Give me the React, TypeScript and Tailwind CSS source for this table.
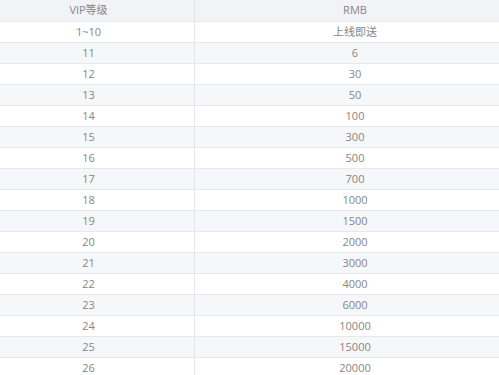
import React from 'react';

const rows: [string, string][] = [
  ['1~10', '上线即送'],
  ['11', '6'],
  ['12', '30'],
  ['13', '50'],
  ['14', '100'],
  ['15', '300'],
  ['16', '500'],
  ['17', '700'],
  ['18', '1000'],
  ['19', '1500'],
  ['20', '2000'],
  ['21', '3000'],
  ['22', '4000'],
  ['23', '6000'],
  ['24', '10000'],
  ['25', '15000'],
  ['26', '20000'],
];

export default function App() {
  return (
    <div
      className="w-[499px] h-[375px] overflow-hidden bg-white text-[11px] text-[#868686]"
      style={{ fontFamily: '"Open Sans", "Noto Sans CJK SC", sans-serif' }}
    >
      {/* header */}
      <div className="grid grid-cols-[195px_1fr] h-[22px] bg-[#f2f3f6] border-b border-[#e6e8ec]">
        <div className="flex items-center justify-center pr-[17px] border-r border-[#e3e5e9]">VIP等级</div>
        <div className="flex items-center justify-center pl-[16px]">RMB</div>
      </div>

      {rows.map(([lv, rmb], i) => (
        <div
          key={lv}
          className={`grid grid-cols-[195px_1fr] h-[21px] border-b border-[#e6e8ec] ${
            i % 2 === 1 ? 'bg-[#f6f7f9]' : 'bg-white'
          }`}
        >
          <div className="flex items-center justify-center pr-[17px] border-r border-[#e3e5e9]">{lv}</div>
          <div className="flex items-center justify-center pl-[16px]">{rmb}</div>
        </div>
      ))}
    </div>
  );
}
